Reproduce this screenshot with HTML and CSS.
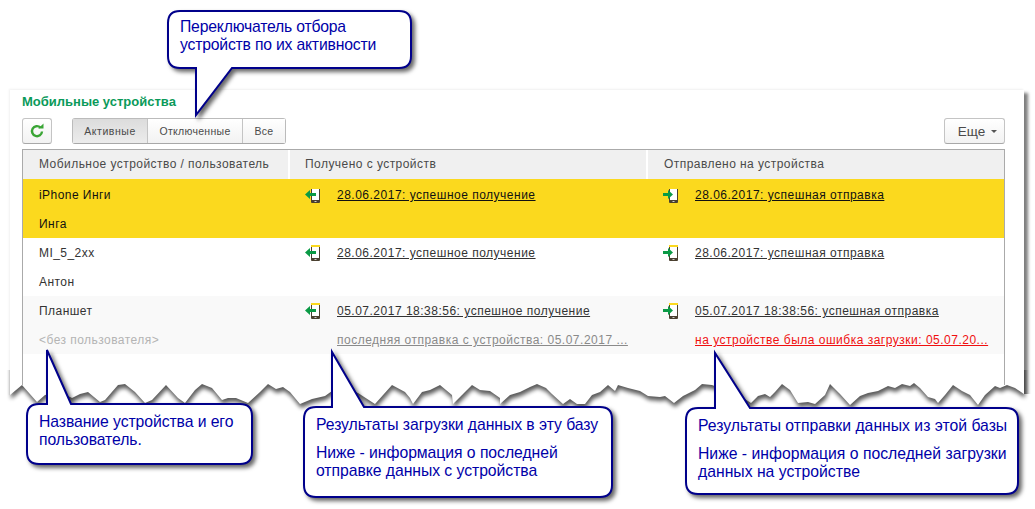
FILE: index.html
```html
<!DOCTYPE html>
<html>
<head>
<meta charset="utf-8">
<title>Мобильные устройства</title>
<link rel="stylesheet" href="styles.css">
</head>
<body>

<div class="panel">
  <div class="paneltitle">Мобильные устройства</div>

  <div class="toolbar">
    <div class="btn refresh">
      <svg width="16" height="16" viewBox="0 0 16 16"><path d="M13 8.500a5 5 0 1 1-1.600-4" fill="none" stroke="#3aa535" stroke-width="2.400"/><path d="M9.200 5.600h5.300V.6z" fill="#3aa535"/></svg>
    </div>
    <div class="switcher">
      <div class="swbtn selected">Активные</div>
      <div class="swbtn">Отключенные</div>
      <div class="swbtn">Все</div>
    </div>
    <div class="btn more">Еще <span class="caret"></span></div>
  </div>

  <div class="grid">
    <div class="gridhead">
      <div class="c1">Мобильное устройство / пользователь</div>
      <div class="c2">Получено с устройств</div>
      <div class="c3">Отправлено на устройства</div>
    </div>

    <div class="gridrow current">
      <div class="c1"><div>iPhone Инги</div><div>Инга</div></div>
      <div class="c2">
        <div class="linkline"><svg class="ico"><use href="#phonein"/></svg><a>28.06.2017: успешное получение</a></div>
      </div>
      <div class="c3">
        <div class="linkline"><svg class="ico"><use href="#phoneout"/></svg><a>28.06.2017: успешная отправка</a></div>
      </div>
    </div>

    <div class="gridrow">
      <div class="c1"><div>MI_5_2xx</div><div>Антон</div></div>
      <div class="c2">
        <div class="linkline"><svg class="ico"><use href="#phonein"/></svg><a>28.06.2017: успешное получение</a></div>
      </div>
      <div class="c3">
        <div class="linkline"><svg class="ico"><use href="#phoneout"/></svg><a>28.06.2017: успешная отправка</a></div>
      </div>
    </div>

    <div class="gridrow alt">
      <div class="c1"><div>Планшет</div><div class="nouser">&lt;без пользователя&gt;</div></div>
      <div class="c2">
        <div class="linkline"><svg class="ico"><use href="#phonein"/></svg><a>05.07.2017 18:38:56: успешное получение</a></div>
        <div class="linkline"><span class="ico"></span><a class="grey">последняя отправка с устройства: 05.07.2017 ...</a></div>
      </div>
      <div class="c3">
        <div class="linkline"><svg class="ico"><use href="#phoneout"/></svg><a>05.07.2017 18:38:56: успешная отправка</a></div>
        <div class="linkline"><span class="ico"></span><a class="red">на устройстве была ошибка загрузки: 05.07.20...</a></div>
      </div>
    </div>
  </div>
</div>

<svg class="defs" width="0" height="0">
  <symbol id="phonein" viewBox="0 0 16 16">
    <rect x="6" y="0" width="9" height="16" rx="1" fill="#4a4030"/>
    <rect x="7" y="1" width="7" height="12" fill="#fff"/>
    <rect class="screen" x="6" y="0" width="9" height="2"/>
    <rect x="9.500" y="14" width="2" height="1" fill="#ccc"/>
    <path d="M0 7.500 5 3v3h6v3H5v3z" fill="#0a9a45"/>
  </symbol>
  <symbol id="phoneout" viewBox="0 0 16 16">
    <rect x="6" y="0" width="9" height="16" rx="1" fill="#4a4030"/>
    <rect x="7" y="1" width="7" height="12" fill="#fff"/>
    <rect class="screen" x="6" y="0" width="9" height="2"/>
    <rect x="9.500" y="14" width="2" height="1" fill="#ccc"/>
    <path d="M10 7.500 5 3v3H0v3h5v3z" fill="#0a9a45"/>
  </symbol>
</svg>

<!-- torn bottom edge of the screenshot: white below the edge, then the shadow the panel casts on it -->
<svg class="torn" width="1035" height="60" viewBox="0 370 1035 60">
  <defs>
    <filter id="tornshadow" x="-2%" y="-40%" width="104%" height="200%">
      <feGaussianBlur in="SourceAlpha" stdDeviation="2"/>
      <feOffset dx="1" dy="4"/>
      <feComposite in2="SourceAlpha" operator="out"/>
      <feComponentTransfer><feFuncA type="linear" slope="0.65"/></feComponentTransfer>
    </filter>
  </defs>
  <path fill="#fff" d="M0 430V395H10L22 385 37 402 45 395 60 392 72 398 80 394 88 392 100 402 105 400 118 385 125 384 135 392 145 403 152 400 166 385 178 398 185 403 195 390 202 384 212 388 222 400 228 398 236 398 248 403 260 392 268 384 276 389 283 387 290 392 300 404 312 399 325 396 332 391 345 388 358 393 375 404 392 385 405 392 410 398 413 404 422 392 430 390 440 385 452 395 453 404 465 392 472 385 480 390 490 391 500 398 500 404 510 395 520 392 530 387 537 384 546 388 552 394 563 404 570 399 577 404 585 404 592 395 600 392 608 385 615 391 618 385 628 388 640 391 648 396 660 397 665 396 674 403 683 396 695 390 702 384 712 385 725 390 740 396 751 403 758 396 765 394 770 397 775 392 782 384 790 390 798 403 808 402 815 404 825 395 830 384 840 394 850 405 860 396 868 393 878 391 888 386 895 388 902 384 910 386 914 383 920 388 928 397 935 399 938 403 945 395 953 385 962 391 970 395 978 405 985 395 995 386 1000 388 1007 385 1015 388 1024 394H1035V430z"/>
  <path fill="#000" filter="url(#tornshadow)" d="M10 350V395L22 385 37 402 45 395 60 392 72 398 80 394 88 392 100 402 105 400 118 385 125 384 135 392 145 403 152 400 166 385 178 398 185 403 195 390 202 384 212 388 222 400 228 398 236 398 248 403 260 392 268 384 276 389 283 387 290 392 300 404 312 399 325 396 332 391 345 388 358 393 375 404 392 385 405 392 410 398 413 404 422 392 430 390 440 385 452 395 453 404 465 392 472 385 480 390 490 391 500 398 500 404 510 395 520 392 530 387 537 384 546 388 552 394 563 404 570 399 577 404 585 404 592 395 600 392 608 385 615 391 618 385 628 388 640 391 648 396 660 397 665 396 674 403 683 396 695 390 702 384 712 385 725 390 740 396 751 403 758 396 765 394 770 397 775 392 782 384 790 390 798 403 808 402 815 404 825 395 830 384 840 394 850 405 860 396 868 393 878 391 888 386 895 388 902 384 910 386 914 383 920 388 928 397 935 399 938 403 945 395 953 385 962 391 970 395 978 405 985 395 995 386 1000 388 1007 385 1015 388 1024 394V350z"/>
</svg>

<div class="callout">
  <svg class="shape"><path d="M180 11H399Q411 11 411 23V56Q411 68 399 68H232L196 115V68H180Q168 68 168 56V23Q168 11 180 11Z"/></svg>
  <div class="ctext t1">Переключатель отбора<br>устройств по их активности</div>
</div>
<div class="callout">
  <svg class="shape"><path d="M39 404H47V350L71 404H240Q252 404 252 416V452Q252 464 240 464H39Q27 464 27 452V416Q27 404 39 404Z"/></svg>
  <div class="ctext t2">Название устройства и его<br>пользователь.</div>
</div>
<div class="callout">
  <svg class="shape"><path d="M316 407H332V352L364 407H600Q612 407 612 419V485Q612 497 600 497H316Q304 497 304 485V419Q304 407 316 407Z"/></svg>
  <div class="ctext t3">Результаты загрузки данных в эту базу<p>Ниже - информация о последней<br>отправке данных с устройства</p></div>
</div>
<div class="callout">
  <svg class="shape"><path d="M698 408H715V353L750 408H1006Q1018 408 1018 420V482Q1018 494 1006 494H698Q686 494 686 482V420Q686 408 698 408Z"/></svg>
  <div class="ctext t4">Результаты отправки данных из этой базы<p>Ниже - информация о последней загрузки<br>данных на устройстве</p></div>
</div>

</body>
</html>
```

FILE: styles.css
```css
html, body { margin: 0; padding: 0; }
body { width: 1035px; height: 509px; overflow: hidden; background: #fff; position: relative; font-family: "Liberation Sans", Arial, sans-serif; }

.panel { margin: 90px 0 0 10px; width: 1014px; height: 330px; box-sizing: border-box; padding: 0 19px 0 12px; background: #fff; box-shadow: 4px 3px 3px rgba(0,0,0,0.5), -1px -1px 2px rgba(0,0,0,0.06); }

.paneltitle { font-size: 13px; font-weight: bold; color: #0a9a5a; padding-top: 4px; height: 24px; line-height: 15px; box-sizing: border-box; }

.toolbar { display: flex; height: 26px; margin-top: 4px; font-size: 10.500px; color: #4a4a4a; }
.btn { box-sizing: border-box; height: 26px; border: 1px solid #c4c4c4; border-bottom-color: #a8a8a8; border-radius: 3px; background: linear-gradient(#fff, #f2f2f2); display: flex; align-items: center; justify-content: center; }
.refresh { width: 30px; }
.more { width: 61px; margin-left: auto; font-size: 13.500px; gap: 6px; padding-left: 6px; }
.caret { border: 3px solid transparent; border-top: 3px solid #555; border-bottom: 0; }

.switcher { display: flex; margin-left: 20px; border: 1px solid #bbb; border-bottom-color: #a8a8a8; border-radius: 3px; box-sizing: border-box; height: 26px; }
.swbtn { display: flex; align-items: center; justify-content: center; height: 24px; background: linear-gradient(#fff, #f2f2f2); border-left: 1px solid #c4c4c4; letter-spacing: 0.3px; width: 94px; }
.swbtn:first-child { border-left: 0; width: 74px; letter-spacing: 0.55px; background: linear-gradient(#dcdcdc, #ececec); }
.swbtn:last-child { width: 42px; }

.grid { margin-top: 5px; border: 1px solid #aaa; border-bottom: 0; height: 235px; font-size: 12px; letter-spacing: 0.45px; color: #333; }
.gridhead, .gridrow { display: flex; }
.gridhead { height: 29px; background: #f0f0f0; align-items: center; color: #4a4a4a; }
.gridhead .c2, .gridhead .c3 { border-left: 2px solid #fff; height: 29px; line-height: 29px; }
.gridhead .c2 { width: 358px; padding-left: 15px; }
.gridhead .c3 { padding-left: 16px; }
.gridhead .c1 { height: 29px; line-height: 29px; }

.c1 { width: 249px; padding-left: 16px; flex: none; }
.c2 { width: 358px; flex: none; box-sizing: border-box; padding-left: 17px; }
.c3 { flex: 1; padding-left: 17px; }

.gridrow { height: 58px; box-sizing: border-box; padding-top: 1px; line-height: 29px; }
.gridrow.current { height: 59px; padding-top: 2px; background: #fbd91e; color: #111; }
.gridrow.alt { background: #f9f9f9; }

.linkline { display: flex; align-items: center; height: 29px; }
.ico { display: block; width: 16px; height: 16px; margin: -1px 16px 0 0; flex: none; }
.screen { fill: #fbd91e; }
.current .screen { fill: #4a4030; }
.linkline a { text-decoration: underline; color: inherit; white-space: nowrap; letter-spacing: 0.5px; }
.linkline a.grey { color: #8a8a8a; }
.linkline a.red { color: #f01010; }
.nouser { color: #b4b4b4; }

.defs { position: absolute; }
.torn { position: absolute; left: 0; top: 370px; }

.callout { position: absolute; left: 0; top: 0; }
.shape { position: absolute; left: 0; top: 0; width: 1035px; height: 509px; overflow: visible; }
.shape path { fill: #fff; stroke: #00008b; stroke-width: 2; filter: drop-shadow(3px 3px 2px rgba(0,0,0,0.6)); }

.ctext { position: absolute; font-size: 15.750px; line-height: 18px; color: #0000a8; white-space: nowrap; }
.ctext p { margin: 10px 0 0; }
.t1 { left: 180px; top: 18px; letter-spacing: -0.2px; }
.t2 { left: 39px; top: 413px; letter-spacing: -0.08px; }
.t3 { left: 316px; top: 416px; letter-spacing: -0.05px; }
.t4 { left: 698px; top: 417px; }
```
